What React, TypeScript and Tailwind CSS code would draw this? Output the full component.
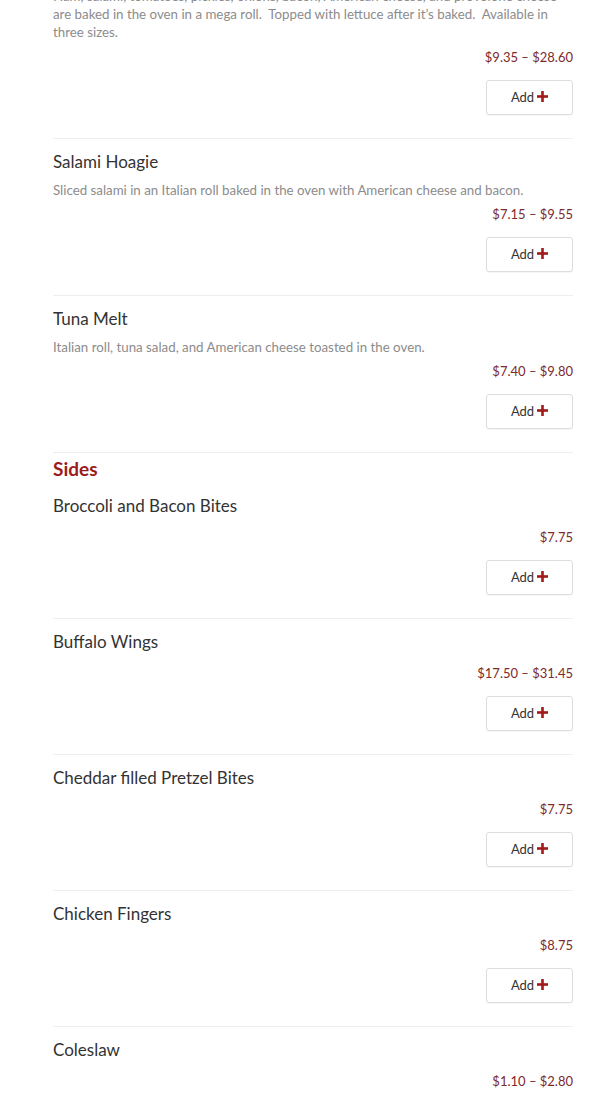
import React from "react";

type Item = { name: string; desc?: string; price: string };

const font = { fontFamily: "Lato, 'Noto Sans', sans-serif" };

function Plus() {
  return (
    <svg width="11" height="11" viewBox="0 0 11 11" className="ml-[3px] mb-[2px]">
      <rect x="4.2" y="0" width="2.6" height="11" fill="#a11a1a" />
      <rect x="0" y="4.2" width="11" height="2.6" fill="#a11a1a" />
    </svg>
  );
}

function Row({ item, first }: { item: Item; first?: boolean }) {
  return (
    <div className={`border-b border-[#eeeeee] ${first ? "pt-0" : "pt-[11px]"} pb-[23px]`}>
      {!first && (
        <div className={`text-[17px] leading-[24px] text-[#333333] ${item.desc ? "mb-[7px]" : "mb-[9px]"}`}>
          {item.name}
        </div>
      )}
      {item.desc && (
        <div className={`text-[13.3px] leading-[18px] text-[#8c8c8c] ${first ? "mb-[6px]" : "mb-[5px]"}`}>
          {item.desc}
        </div>
      )}
      <div className="text-right text-[13px] leading-[20px] text-[#7d2a2a]">{item.price}</div>
      <div className="flex justify-end mt-[13px]">
        <button className="w-[87px] h-[35px] border border-[#dddddd] rounded-[3px] bg-white flex items-center justify-center text-[13px] text-[#333333] shadow-[0_1px_1px_rgba(0,0,0,0.04)]">
          Add
          <Plus />
        </button>
      </div>
    </div>
  );
}

export default function App() {
  const first: Item = {
    name: "",
    desc:
      "Ham, salami, tomatoes, pickles, onions, bacon, American cheese, and provolone cheese are baked in the oven in a mega roll.\u00a0 Topped with lettuce after it\u2019s baked.\u00a0 Available in three sizes.",
    price: "$9.35 \u2013 $28.60",
  };
  const hoagies: Item[] = [
    {
      name: "Salami Hoagie",
      desc: "Sliced salami in an Italian roll baked in the oven with American cheese and bacon.",
      price: "$7.15 \u2013 $9.55",
    },
    {
      name: "Tuna Melt",
      desc: "Italian roll, tuna salad, and American cheese toasted in the oven.",
      price: "$7.40 \u2013 $9.80",
    },
  ];
  const sides: Item[] = [
    { name: "Broccoli and Bacon Bites", price: "$7.75" },
    { name: "Buffalo Wings", price: "$17.50 \u2013 $31.45" },
    { name: "Cheddar filled Pretzel Bites", price: "$7.75" },
    { name: "Chicken Fingers", price: "$8.75" },
    { name: "Coleslaw", price: "$1.10 \u2013 $2.80" },
  ];
  return (
    <div className="w-[610px] h-[1099px] overflow-hidden bg-white" style={font}>
      <div className="pl-[53px] pr-[37px] -mt-[13px]">
        <Row item={first} first />
        {hoagies.map((it) => (
          <Row key={it.name} item={it} />
        ))}
        <div className="pt-[4px] text-[19px] leading-[24px] font-bold text-[#9b1b1b] mb-[13px]">Sides</div>
        {sides.map((it, i) => (
          <div key={it.name} className={i === 0 ? "-mt-[11px]" : ""}>
            <Row item={it} />
          </div>
        ))}
      </div>
    </div>
  );
}
